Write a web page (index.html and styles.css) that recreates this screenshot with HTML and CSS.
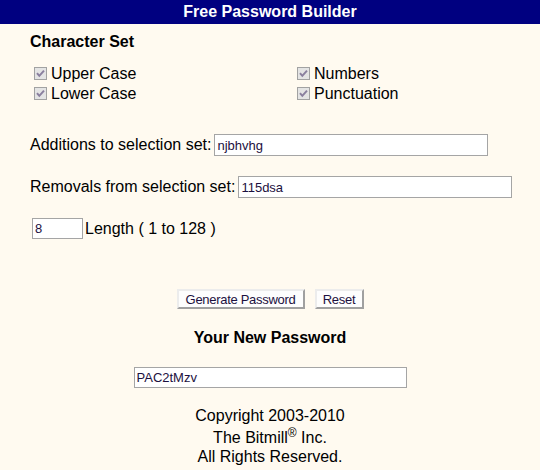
FILE: index.html
```html
<!DOCTYPE html>
<html>
<head>
<meta charset="utf-8">
<title>Free Password Builder</title>
<link rel="stylesheet" href="styles.css">
</head>
<body>
<div class="title">Free Password Builder</div>
<div class="content">
  <div class="heading">Character Set</div>
  <div class="checks">
    <div class="check"><svg class="box" width="13" height="13" viewBox="0 0 13 13"><rect x="0.5" y="0.5" width="12" height="12" fill="#e4e4e4" stroke="#a2a2a2"/><path d="M3 6.2 L5.3 8.8 L10 3.6" fill="none" stroke="#8a7f9e" stroke-width="2"/></svg><span>Upper Case</span></div>
    <div class="check"><svg class="box" width="13" height="13" viewBox="0 0 13 13"><rect x="0.5" y="0.5" width="12" height="12" fill="#e4e4e4" stroke="#a2a2a2"/><path d="M3 6.2 L5.3 8.8 L10 3.6" fill="none" stroke="#8a7f9e" stroke-width="2"/></svg><span>Numbers</span></div>
    <div class="check"><svg class="box" width="13" height="13" viewBox="0 0 13 13"><rect x="0.5" y="0.5" width="12" height="12" fill="#e4e4e4" stroke="#a2a2a2"/><path d="M3 6.2 L5.3 8.8 L10 3.6" fill="none" stroke="#8a7f9e" stroke-width="2"/></svg><span>Lower Case</span></div>
    <div class="check"><svg class="box" width="13" height="13" viewBox="0 0 13 13"><rect x="0.5" y="0.5" width="12" height="12" fill="#e4e4e4" stroke="#a2a2a2"/><path d="M3 6.2 L5.3 8.8 L10 3.6" fill="none" stroke="#8a7f9e" stroke-width="2"/></svg><span>Punctuation</span></div>
  </div>
  <div class="field first"><label>Additions to selection set:</label><input class="text" type="text" value="njbhvhg"></div>
  <div class="field"><label>Removals from selection set:</label><input class="text" type="text" value="115dsa"></div>
  <div class="field"><input class="text short" type="text" value="8"><label class="after">Length ( 1 to 128 )</label></div>
</div>
<div class="actions">
  <button class="btn gen" type="button">Generate Password</button>
  <button class="btn reset" type="button">Reset</button>
</div>
<div class="result-title">Your New Password</div>
<div class="result"><input class="text out" type="text" value="PAC2tMzv"></div>
<div class="footer">
  <div class="line">Copyright 2003-2010</div>
  <div class="line second">The Bitmill<sup>®</sup> Inc.</div>
  <div class="line third">All Rights Reserved.</div>
</div>
</body>
</html>
```
FILE: styles.css
```css
html, body {
  margin: 0;
  padding: 0;
}
body {
  background: #fffaf0;
  font-family: "Liberation Sans", Arial, sans-serif;
  font-size: 16px;
  color: #000;
}
.title {
  height: 24px;
  line-height: 24px;
  background: #000080;
  color: #fff;
  font-weight: bold;
  text-align: center;
}
.content {
  padding-left: 30px;
}
.heading {
  margin-top: 9px;
  font-weight: bold;
  line-height: 18px;
}
.checks {
  display: grid;
  grid-template-columns: 263px auto;
  margin: 13px 0 0 4px;
}
.check {
  display: flex;
  align-items: flex-start;
  height: 20px;
  line-height: 20px;
}
.box {
  flex: none;
  margin: 3px 4px 0 0;
}
.field {
  display: flex;
  align-items: center;
  margin-top: 20px;
}
.field.first {
  margin-top: 30px;
}
.text {
  box-sizing: border-box;
  width: 274px;
  height: 22px;
  margin: 0 0 0 3px;
  padding: 0 2px;
  border: 1px solid #a5a5a5;
  background: #fff;
  font-family: "Liberation Sans", Arial, sans-serif;
  font-size: 13px;
  color: #1c1040;
  outline: none;
}
.text.short {
  width: 51px;
  height: 21px;
  margin-left: 2px;
}
.after {
  margin-left: 2px;
}
.actions {
  display: flex;
  justify-content: center;
  gap: 10px;
  margin-top: 50px;
}
.btn {
  box-sizing: border-box;
  height: 20px;
  padding: 0;
  border: 2px solid;
  border-color: #ececec #a0a0a0 #a0a0a0 #ececec;
  background: #fdfdfd;
  font-family: "Liberation Sans", Arial, sans-serif;
  font-size: 13px;
  letter-spacing: -0.3px;
  color: #1c1040;
  text-align: center;
}
.btn.gen {
  width: 128px;
}
.btn.reset {
  width: 49px;
}
.result-title {
  margin-top: 20px;
  line-height: 18px;
  font-weight: bold;
  text-align: center;
}
.result {
  display: flex;
  justify-content: center;
  margin-top: 20px;
}
.text.out {
  width: 273px;
  height: 21px;
  margin: 0;
  font-size: 13px;
}
.footer {
  margin-top: 19px;
  text-align: center;
}
.line {
  line-height: 18px;
}
.line.second {
  padding-top: 4px;
}
.line.third {
  padding-top: 1px;
}
sup {
  font-size: 12px;
  line-height: 0;
  vertical-align: 6px;
}
```
